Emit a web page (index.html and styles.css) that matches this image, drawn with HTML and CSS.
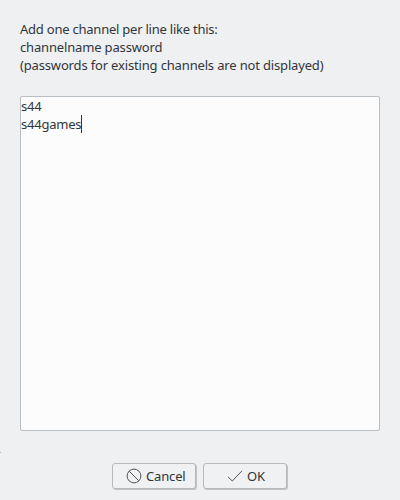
FILE: index.html
```html
<!DOCTYPE html>
<html lang="en">
<head>
<meta charset="utf-8">
<title>Channels</title>
<link rel="stylesheet" href="styles.css">
</head>
<body>
<main class="dialog">
  <p class="hint"><span class="tight">Add one channel per line like this:</span><br>channelname password<br>(passwords for existing channels are not displayed)</p>
  <div class="editor tight">
    <div>s44</div>
    <div class="line">s44games<span class="caret"></span></div>
  </div>
  <div class="actions">
    <button class="button cancel"><svg width="16" height="16" viewBox="0 0 16 16"><circle cx="8" cy="8" r="6.9"/><path d="M3.2 3.2L12.8 12.8"/></svg><span>Cancel</span></button>
    <button class="button ok"><svg width="16" height="16" viewBox="0 0 16 16"><path d="M1 8.8L5.3 13L15 2.8"/></svg><span>OK</span></button>
  </div>
  <span class="edge-mark"></span>
</main>
</body>
</html>
```
FILE: styles.css
```css
* { box-sizing: border-box; }
body { margin: 0; background: #eff0f1; color: #31363b; font: 13px/18px "Noto Sans", sans-serif; letter-spacing: -0.16px; }
.dialog { position: relative; height: 500px; padding: 20px 20px 10px; display: flex; flex-direction: column; }
.tight { letter-spacing: -0.23px; }
.hint { margin: 0 0 22px; }
.editor { height: 335px; flex: none; border: 1px solid #babfc4; border-radius: 2px; background: #fcfcfc; }
.line { display: flex; }
.caret { width: 1px; height: 18px; background: #31363b; }
.actions { display: flex; gap: 7px; margin: 32px 0 0 92px; }
.button { height: 26px; padding: 0 0 0 13px; font: inherit; letter-spacing: inherit; color: inherit; display: flex; align-items: center; gap: 4px; border: 1px solid #b7babd; border-radius: 3px; background: #f0f1f2; box-shadow: 1px 1px 0 #c0c3c5; }
.cancel { width: 84px; }
.ok { width: 84px; padding-left: 23px; }
svg { flex: none; fill: none; stroke: #50555a; stroke-width: 1; }
.edge-mark { position: absolute; left: 0; top: 452px; width: 1px; height: 1px; background: #b7babd; }
```
